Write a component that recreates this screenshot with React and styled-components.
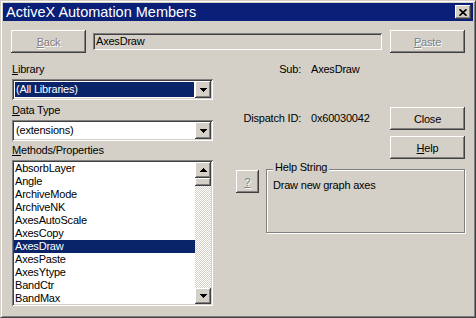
import React from 'react'
import styled, { createGlobalStyle, css } from 'styled-components'

const face = '#D4D0C8'
const shadow = '#808080'
const dark = '#404040'
const highlight = '#0A246A'

const GlobalStyle = createGlobalStyle`
  html, body {
    margin: 0;
    padding: 0;
    background: ${face};
  }
  * {
    box-sizing: border-box;
  }
`

const raised = css`
  box-shadow: inset -1px -1px 0 ${dark}, inset 1px 1px 0 #fff,
    inset -2px -2px 0 ${shadow}, inset 2px 2px 0 ${face};
`

const sunken = css`
  box-shadow: inset 1px 1px 0 ${shadow}, inset -1px -1px 0 #fff,
    inset 2px 2px 0 ${dark}, inset -2px -2px 0 ${face};
`

const members = [
  'AbsorbLayer',
  'Angle',
  'ArchiveMode',
  'ArchiveNK',
  'AxesAutoScale',
  'AxesCopy',
  'AxesDraw',
  'AxesPaste',
  'AxesYtype',
  'BandCtr',
  'BandMax'
]

const Down = () => (
  <svg width='7' height='4' viewBox='0 0 7 4'>
    <path d='M0 0h7L3.5 4z' fill='#000' shapeRendering='crispEdges' />
  </svg>
)

const Up = () => (
  <svg width='7' height='4' viewBox='0 0 7 4'>
    <path d='M0 4h7L3.5 0z' fill='#000' shapeRendering='crispEdges' />
  </svg>
)

const App = () => {
  return (
    <>
      <GlobalStyle />
      <Window>
        <TitleBar>
          <Title>ActiveX Automation Members</Title>
          <TitleButton>
            <svg width='8' height='7' viewBox='0 0 8 7'>
              <path
                d='M0.5 0.3L7.5 6.7M7.5 0.3L0.5 6.7'
                stroke='#000'
                strokeWidth='1.7'
              />
            </svg>
          </TitleButton>
        </TitleBar>

        <Body>
          <TopRow>
            <Button disabled>
              <u>B</u>ack
            </Button>
            <TextField>AxesDraw</TextField>
            <Button disabled>
              <u>P</u>aste
            </Button>
          </TopRow>

          <Main>
            <LeftColumn>
              <FieldLabel top={10}>
                <u>L</u>ibrary
              </FieldLabel>
              <Combo>
                <ComboValue selected>(All Libraries)</ComboValue>
                <DropButton>
                  <Down />
                </DropButton>
              </Combo>

              <FieldLabel top={4}>
                <u>D</u>ata Type
              </FieldLabel>
              <Combo>
                <ComboValue>(extensions)</ComboValue>
                <DropButton>
                  <Down />
                </DropButton>
              </Combo>

              <FieldLabel top={3}>
                <u>M</u>ethods/Properties
              </FieldLabel>
              <ListBox>
                <Items>
                  {members.map(name => (
                    <ListItem key={name} selected={name === 'AxesDraw'}>
                      {name}
                    </ListItem>
                  ))}
                </Items>
                <ScrollBar>
                  <ScrollArrow>
                    <Up />
                  </ScrollArrow>
                  <Thumb />
                  <Track />
                  <ScrollArrow>
                    <Down />
                  </ScrollArrow>
                </ScrollBar>
              </ListBox>
            </LeftColumn>

            <RightColumn>
              <InfoLine top={10}>
                <InfoLabel>Sub:</InfoLabel>
                <InfoValue>AxesDraw</InfoValue>
              </InfoLine>

              <DispatchRow>
                <InfoLine>
                  <InfoLabel>Dispatch ID:</InfoLabel>
                  <InfoValue>0x60030042</InfoValue>
                </InfoLine>
                <Button>Close</Button>
              </DispatchRow>

              <SideButton>
                <u>H</u>elp
              </SideButton>

              <HelpRow>
                <QuestionButton disabled>
                  <u>?</u>
                </QuestionButton>
                <GroupBox>
                  <GroupTitle>Help String</GroupTitle>
                  <HelpText>Draw new graph axes</HelpText>
                </GroupBox>
              </HelpRow>
            </RightColumn>
          </Main>
        </Body>
      </Window>
    </>
  )
}

export default App

const Window = styled.div`
  width: 476px;
  height: 318px;
  display: flex;
  flex-direction: column;
  padding: 2px;
  background: ${face};
  border: 1px solid;
  border-color: ${face} ${dark} ${dark} ${face};
  box-shadow: inset 1px 1px 0 #fff, inset -1px -1px 0 ${shadow};
  font-family: 'Liberation Sans', Arial, sans-serif;
  font-size: 11px;
  letter-spacing: -0.2px;
  color: #000;
`

const TitleBar = styled.div`
  height: 18px;
  flex: none;
  display: flex;
  align-items: center;
  justify-content: space-between;
  padding: 0 2px 0 3px;
  background: #0a1f78;
`

const Title = styled.span`
  color: #fff;
  font-size: 14.5px;
  letter-spacing: 0;
  line-height: 18px;
`

const TitleButton = styled.div`
  width: 16px;
  height: 14px;
  display: flex;
  align-items: center;
  justify-content: center;
  background: ${face};
  ${raised};
`

const Body = styled.div`
  flex: 1;
  display: flex;
  flex-direction: column;
  padding: 9px 8px 0;
`

const TopRow = styled.div`
  display: flex;
  align-items: center;
`

const Button = styled.button`
  width: 75px;
  height: 23px;
  flex: none;
  padding: 0;
  border: 0;
  background: ${face};
  font: inherit;
  letter-spacing: inherit;
  color: #000;
  ${raised};

  &:disabled {
    color: ${shadow};
    text-shadow: 1px 1px 0 #fff;
  }
`

const TextField = styled.div`
  flex: 1;
  height: 17px;
  margin: 0 8px 0 7px;
  padding-left: 3px;
  line-height: 17px;
  background: ${face};
  ${sunken};
`

const Main = styled.div`
  flex: 1;
  display: grid;
  grid-template-columns: 201px 1fr;
  padding-left: 1px;
`

const LeftColumn = styled.div`
  display: flex;
  flex-direction: column;
`

const FieldLabel = styled.div`
  margin-top: ${props => props.top}px;
  line-height: 13px;
`

const Combo = styled.div`
  height: 21px;
  margin-top: 3px;
  display: flex;
  padding: 2px;
  background: #fff;
  ${sunken};
`

const ComboValue = styled.div`
  flex: 1;
  margin: 1px;
  padding-left: 1px;
  line-height: 15px;
  background: ${props => (props.selected ? highlight : 'transparent')};
  color: ${props => (props.selected ? '#fff' : '#000')};
`

const DropButton = styled.div`
  width: 16px;
  height: 17px;
  display: flex;
  align-items: center;
  justify-content: center;
  background: ${face};
  ${raised};
`

const ListBox = styled.div`
  height: 146px;
  margin-top: 3px;
  display: flex;
  padding: 2px;
  background: #fff;
  ${sunken};
`

const Items = styled.div`
  flex: 1;
  overflow: hidden;
`

const ListItem = styled.div`
  height: 13px;
  line-height: 13px;
  padding-left: 1px;
  white-space: nowrap;
  background: ${props => (props.selected ? highlight : 'transparent')};
  color: ${props => (props.selected ? '#fff' : '#000')};
`

const ScrollBar = styled.div`
  width: 16px;
  display: flex;
  flex-direction: column;
`

const ScrollArrow = styled.div`
  width: 16px;
  height: 16px;
  flex: none;
  display: flex;
  align-items: center;
  justify-content: center;
  background: ${face};
  ${raised};
`

const Thumb = styled.div`
  height: 8px;
  flex: none;
  background: ${face};
  ${raised};
`

const Track = styled.div`
  flex: 1;
  background-color: ${face};
  background-image: conic-gradient(
    #fff 25%,
    ${face} 0 50%,
    #fff 0 75%,
    ${face} 0
  );
  background-size: 2px 2px;
`

const RightColumn = styled.div`
  display: flex;
  flex-direction: column;
  padding-left: 23px;
`

const InfoLine = styled.div`
  display: flex;
  margin-top: ${props => props.top || 0}px;
  line-height: 13px;
`

const InfoLabel = styled.span`
  width: 65px;
  text-align: right;
`

const InfoValue = styled.span`
  margin-left: 10px;
`

const DispatchRow = styled.div`
  display: flex;
  align-items: center;
  justify-content: space-between;
  margin-top: 31px;
`

const SideButton = styled(Button)`
  align-self: flex-end;
  margin-top: 6px;
`

const HelpRow = styled.div`
  display: flex;
  align-items: flex-start;
  gap: 7px;
  margin-top: 10px;
`

const QuestionButton = styled(Button)`
  width: 23px;
  margin-top: 1px;
`

const GroupBox = styled.div`
  position: relative;
  width: 199px;
  height: 64px;
  padding: 9px 6px;
  border: 1px solid ${shadow};
  box-shadow: inset 1px 1px 0 #fff, 1px 1px 0 #fff;
`

const GroupTitle = styled.span`
  position: absolute;
  top: -9px;
  left: 6px;
  padding: 0 2px;
  line-height: 13px;
  background: ${face};
`

const HelpText = styled.div`
  line-height: 13px;
`
